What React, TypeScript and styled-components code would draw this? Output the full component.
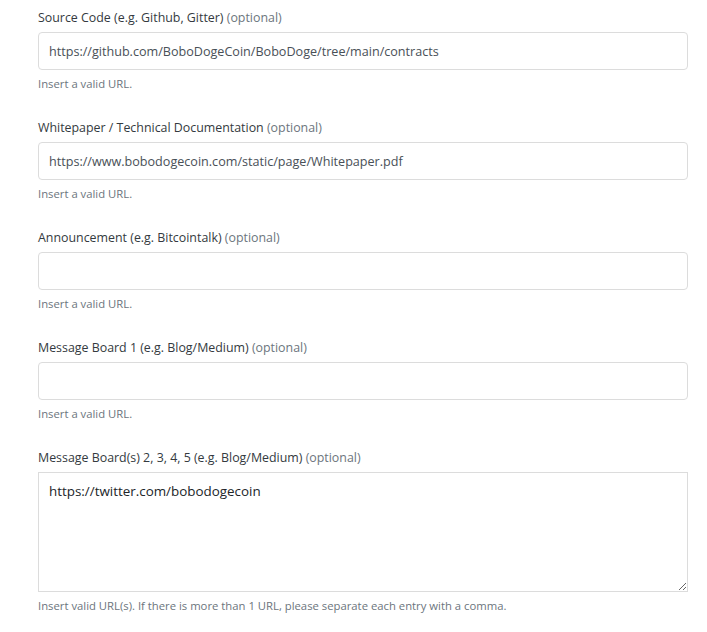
import React from "react";
import styled, { createGlobalStyle } from "styled-components";

const Global = createGlobalStyle`
  html, body { margin: 0; padding: 0; background: #fff; }
  body { font-family: "Open Sans", "Noto Sans", sans-serif; }
`;

const Form = styled.div`
  padding: 8px 19px 0 38px;
  width: 650px;
`;

const Group = styled.div`
  display: flex;
  flex-direction: column;
  margin-bottom: 25px;
`;

const Label = styled.label`
  font-size: 12.4px;
  line-height: 20px;
  color: #343a40;
  margin-bottom: 4px;
`;

const Optional = styled.span`
  color: #6c757d;
`;

const Input = styled.input`
  box-sizing: border-box;
  height: 38px;
  width: 100%;
  border: 1px solid #dcdcdc;
  border-radius: 4px;
  padding: 0 10px;
  font-family: inherit;
  font-size: 12.6px;
  color: #495057;
  outline: none;
  background: #fff;
`;

const TextArea = styled.textarea`
  box-sizing: border-box;
  height: 120px;
  width: 100%;
  border: 1px solid #dcdcdc;
  border-radius: 0;
  padding: 6px 10px;
  font-family: inherit;
  font-size: 13.4px;
  line-height: 24px;
  color: #212529;
  outline: none;
  resize: vertical;
  display: block;
`;

const Help = styled.small`
  margin-top: 5px;
  font-size: 11.3px;
  line-height: 18px;
  color: #6c757d;
`;

type FieldProps = { label: string; value: string; help?: string; multi?: boolean };

const Field = ({ label, value, help = "Insert a valid URL.", multi }: FieldProps) => (
  <Group>
    <Label>
      {label} <Optional>(optional)</Optional>
    </Label>
    {multi ? (
      <TextArea defaultValue={value} />
    ) : (
      <Input type="text" defaultValue={value} />
    )}
    <Help>{help}</Help>
  </Group>
);

export default function App() {
  return (
    <>
      <Global />
      <Form>
        <Field
          label="Source Code (e.g. Github, Gitter)"
          value="https://github.com/BoboDogeCoin/BoboDoge/tree/main/contracts"
        />
        <Field
          label="Whitepaper / Technical Documentation"
          value="https://www.bobodogecoin.com/static/page/Whitepaper.pdf"
        />
        <Field label="Announcement (e.g. Bitcointalk)" value="" />
        <Field label="Message Board 1 (e.g. Blog/Medium)" value="" />
        <Field
          label="Message Board(s) 2, 3, 4, 5 (e.g. Blog/Medium)"
          value="https://twitter.com/bobodogecoin"
          multi
          help="Insert valid URL(s). If there is more than 1 URL, please separate each entry with a comma."
        />
      </Form>
    </>
  );
}
